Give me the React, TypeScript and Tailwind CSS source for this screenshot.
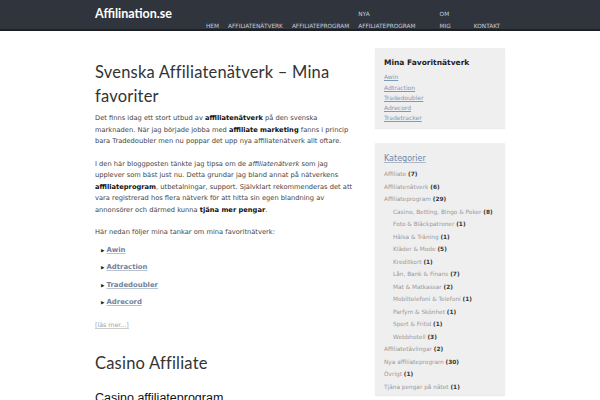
import React from 'react';

const navItems = [
  { label: 'HEM', cls: '' },
  { label: 'AFFILIATENÄTVERK', cls: '' },
  { label: 'AFFILIATEPROGRAM', cls: '' },
  { label: 'NYA', second: 'AFFILIATEPROGRAM', cls: '' },
  { label: 'OM', second: 'MIG', cls: 'ml-[15px]' },
  { label: 'KONTAKT', cls: 'ml-[14px]' },
];

const favorites = ['Awin', 'Adtraction', 'Tradedoubler', 'Adrecord', 'Tradetracker'];

const categories: { name: string; count: number; sub?: boolean }[] = [
  { name: 'Affiliate', count: 7 },
  { name: 'Affiliatenätverk', count: 6 },
  { name: 'Affiliateprogram', count: 29 },
  { name: 'Casino, Betting, Bingo & Poker', count: 8, sub: true },
  { name: 'Foto & Bläckpatroner', count: 1, sub: true },
  { name: 'Hälsa & Träning', count: 1, sub: true },
  { name: 'Kläder & Mode', count: 5, sub: true },
  { name: 'Kreditkort', count: 1, sub: true },
  { name: 'Lån, Bank & Finans', count: 7, sub: true },
  { name: 'Mat & Matkassar', count: 2, sub: true },
  { name: 'Mobiltelefoni & Telefoni', count: 1, sub: true },
  { name: 'Parfym & Skönhet', count: 1, sub: true },
  { name: 'Sport & Fritid', count: 1, sub: true },
  { name: 'Webbhotell', count: 3, sub: true },
  { name: 'Affiliatetävlingar', count: 2 },
  { name: 'Nya affiliateprogram', count: 30 },
  { name: 'Övrigt', count: 1 },
  { name: 'Tjäna pengar på nätet', count: 1 },
];

const App = () => {
  return (
    <div className="w-[600px] h-[400px] overflow-hidden bg-white font-['DejaVu_Sans',sans-serif]">
      {/* header */}
      <div className="h-[31px] bg-[#30343d] border-b-2 border-[#1d2025]">
        <div className="flex items-end h-full pl-[95px]">
          <div className="self-center text-white text-[12.5px] font-['Lato',sans-serif] font-bold w-[111px]">
            Affilination.se
          </div>
          <ul className="flex items-end gap-[9px] mb-[-3px] text-[5.8px] text-[#c9ccd2] leading-[12px]">
            {navItems.map((n) => (
              <li key={n.label} className={n.cls}>
                {n.second ? (
                  <>
                    <div>{n.label}</div>
                    <div>{n.second}</div>
                  </>
                ) : (
                  n.label
                )}
              </li>
            ))}
          </ul>
        </div>
      </div>

      <div className="flex pl-[95px] pt-[17px] gap-[20px]">
        {/* main column */}
        <div className="w-[260px] pt-[12px] text-[#333]">
          <h1 className="text-[16.5px] leading-[24px] font-['Lato',sans-serif] text-[#333] tracking-[0.2px]">
            Svenska Affiliatenätverk – Mina favoriter
          </h1>
          <div className="mt-[5px] text-[6.7px] leading-[11.5px] text-[#444] space-y-[11px]">
            <p>
              Det finns idag ett stort utbud av <b className="text-[#111]">affiliatenätverk</b> på den svenska
              marknaden. När jag började jobba med <b className="text-[#111]">affiliate marketing</b> fanns i princip
              bara Tradedoubler men nu poppar det upp nya affiliatenätverk allt oftare.
            </p>
            <p>
              I den här bloggposten tänkte jag tipsa om de <i>affiliatenätverk</i> som jag upplever som bäst just
              nu. Detta grundar jag bland annat på nätverkens <b className="text-[#111]">affiliateprogram</b>,
              utbetalningar, support. Självklart rekommenderas det att vara registrerad hos flera nätverk för att
              hitta sin egen blandning av annonsörer och därmed kunna <b className="text-[#111]">tjäna mer pengar</b>.
            </p>
            <p>Här nedan följer mina tankar om mina favoritnätverk:</p>
          </div>
          <ul className="mt-[6px] ml-[6px] space-y-[6px] text-[6.9px] leading-[11.5px]">
            {favorites.slice(0, 4).map((f) => (
              <li key={f} className="flex items-center gap-[2px]">
                <span className="text-[#222] text-[4.5px]">▶</span>
                <a className="font-bold text-[#6f839d] underline decoration-[#b9c3cf]">{f}</a>
              </li>
            ))}
          </ul>
          <div className="mt-[11px] text-[6.3px] text-[#9aa3ad] underline decoration-[#ccc]">[läs mer...]</div>
          <h2 className="mt-[22px] text-[16.5px] leading-[24px] font-['Lato',sans-serif] text-[#333] tracking-[0.2px]">
            Casino Affiliate
          </h2>
          <h3 className="mt-[16px] text-[12.5px] leading-[14px] font-['Liberation_Sans',sans-serif] text-[#111]">
            Casino affiliateprogram
          </h3>
        </div>

        {/* sidebar */}
        <div className="w-[130px] flex flex-col gap-[15px]">
          <div className="bg-[#efefef] shadow-[0_1px_1px_rgba(0,0,0,0.08)] px-[9px] pt-[9px] pb-[9px] h-[80px]">
            <div className="text-[7.5px] font-bold text-[#222]">Mina Favoritnätverk</div>
            <ul className="mt-[4px] text-[6px] leading-[10.3px]">
              {favorites.map((f) => (
                <li key={f}>
                  <a className="text-[#7f98b8] underline">{f}</a>
                </li>
              ))}
            </ul>
          </div>
          <div className="bg-[#efefef] shadow-[0_1px_1px_rgba(0,0,0,0.08)] px-[9px] pt-[10px] h-[252px]">
            <div className="text-[8px] text-[#6e87a8] underline decoration-[#aab8ca]">Kategorier</div>
            <ul className="mt-[3px] text-[5.8px] leading-[12.5px]">
              {categories.map((c) => (
                <li key={c.name} className={c.sub ? 'pl-[9px]' : ''}>
                  <span className="text-[#9a9a9a]">{c.name}</span>{' '}
                  <span className="text-[#333] font-bold">({c.count})</span>
                </li>
              ))}
            </ul>
          </div>
        </div>
      </div>
    </div>
  );
};

export default App;
